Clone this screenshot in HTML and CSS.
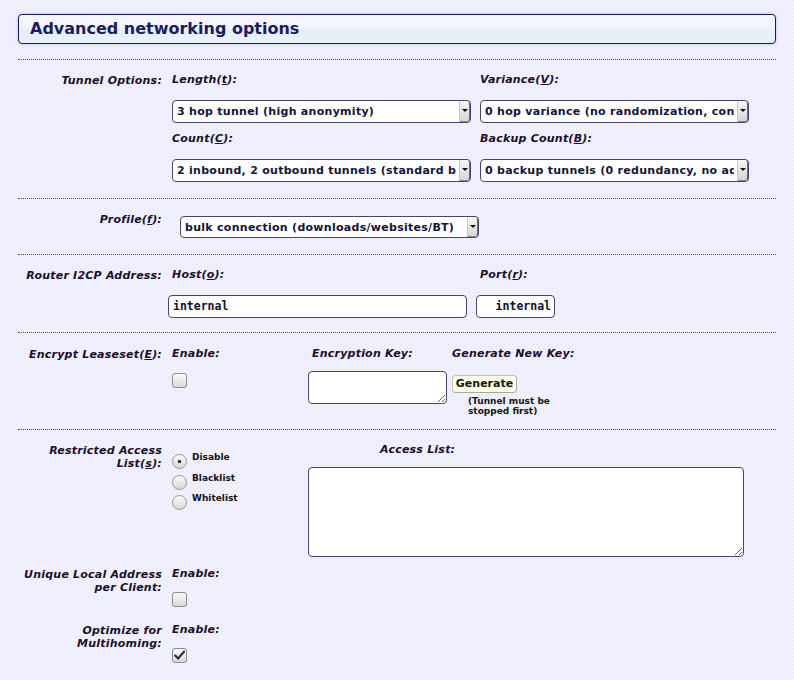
FILE: index.html
```html
<!DOCTYPE html>
<html>
<head>
<meta charset="utf-8">
<title>Advanced networking options</title>
<link rel="stylesheet" href="styles.css">
</head>
<body>
<div class="page">
  <h3 class="panel-title">Advanced networking options</h3>

  <div class="section">
    <div class="lbl">Tunnel Options:</div>
    <div class="body tunnel-grid">
      <div class="flabel">Length(<u>t</u>):</div>
      <div class="flabel">Variance(<u>V</u>):</div>
      <div class="sel w299"><select><option>3 hop tunnel (high anonymity)</option></select><span class="arrow"></span></div>
      <div class="sel w269"><select><option>0 hop variance (no randomization, consistent performance)</option></select><span class="arrow"></span></div>
      <div class="flabel">Count(<u>C</u>):</div>
      <div class="flabel">Backup Count(<u>B</u>):</div>
      <div class="sel w299 last"><select><option>2 inbound, 2 outbound tunnels (standard bandwidth usage, standard reliability)</option></select><span class="arrow"></span></div>
      <div class="sel w269 last"><select><option>0 backup tunnels (0 redundancy, no added resource usage)</option></select><span class="arrow"></span></div>
    </div>
  </div>

  <div class="section">
    <div class="lbl">Profile(<u>f</u>):</div>
    <div class="body">
      <div class="sel profile"><select><option>bulk connection (downloads/websites/BT)</option></select><span class="arrow"></span></div>
    </div>
  </div>

  <div class="section router">
    <div class="lbl">Router I2CP Address:</div>
    <div class="body tunnel-grid">
      <div class="flabel">Host(<u>o</u>):</div>
      <div class="flabel">Port(<u>r</u>):</div>
      <input class="txt host" type="text" value="internal">
      <input class="txt port" type="text" value="internal">
    </div>
  </div>

  <div class="section encrypt">
    <div class="lbl">Encrypt Leaseset(<u>E</u>):</div>
    <div class="body enc-grid">
      <div class="col">
        <div class="flabel enablelabel">Enable:</div>
        <span class="check"></span>
      </div>
      <div class="col">
        <div class="flabel keylabel">Encryption Key:</div>
        <textarea class="area key"></textarea>
      </div>
      <div class="col">
        <div class="flabel genlabel">Generate New Key:</div>
        <button class="btn" type="button">Generate</button>
        <div class="note">(Tunnel must be stopped first)</div>
      </div>
    </div>
  </div>

  <div class="section restricted">
    <div class="lbl">Restricted Access List(<u>s</u>):</div>
    <div class="body acc-grid">
      <div class="radios">
        <div class="radio-row"><span class="radio on"></span><span class="rtext">Disable</span></div>
        <div class="radio-row"><span class="radio"></span><span class="rtext">Blacklist</span></div>
        <div class="radio-row"><span class="radio"></span><span class="rtext">Whitelist</span></div>
      </div>
      <div class="col">
        <div class="flabel acclabel">Access List:</div>
        <textarea class="area acc"></textarea>
      </div>
    </div>
  </div>

  <div class="section plain">
    <div class="lbl">Unique Local Address per Client:</div>
    <div class="body">
      <div class="flabel">Enable:</div>
      <span class="check"></span>
    </div>
  </div>

  <div class="section plain multi">
    <div class="lbl">Optimize for Multihoming:</div>
    <div class="body">
      <div class="flabel">Enable:</div>
      <span class="check on"><svg width="13" height="13" viewBox="0 0 13 13"><path d="M2.2 6.6 L5.1 9.6 L11 2.6" fill="none" stroke="#2e2e2e" stroke-width="2.2" stroke-linecap="round" stroke-linejoin="round"/></svg></span>
    </div>
  </div>
</div>
</body>
</html>
```

FILE: styles.css
```css
* {
  box-sizing: border-box;
}

html, body {
  margin: 0;
  height: 100%;
}

body {
  background-color: #f0f0fd;
  background-image: repeating-conic-gradient(#f3f3ff 0 25%, #ebebfa 0 50%);
  background-size: 4px 4px;
  font-family: "DejaVu Sans", "Liberation Sans", sans-serif;
  color: #1c0e2c;
}

.page {
  padding: 14px 18px 0;
}

.panel-title {
  margin: 0 0 15px;
  height: 30px;
  border: 1px solid #1c1c58;
  border-radius: 4px;
  padding-left: 11px;
  font-size: 16px;
  font-weight: bold;
  line-height: 28px;
  color: #1c1c5e;
  background: linear-gradient(#f6f6ff 0, #f2f3fe 48%, #e6eff9 52%, #e9f1fa 100%);
  box-shadow: 0 0 3px rgba(120, 120, 170, 0.45);
}

.section {
  display: flex;
  align-items: flex-start;
  border-top: 1px dotted #4a4a5a;
  padding: 13px 0 16px;
}

.lbl {
  width: 144px;
  flex-shrink: 0;
  margin-right: 10px;
  padding-top: 1px;
  text-align: right;
  font-size: 11px;
  font-weight: bold;
  font-style: italic;
  line-height: 13px;
  letter-spacing: 0.22px;
  color: #1c0e2c;
}

.body {
  flex: 1;
}

.flabel {
  font-size: 11px;
  font-weight: bold;
  font-style: italic;
  line-height: 14px;
  letter-spacing: 0.22px;
  color: #1c0e2c;
  margin-bottom: 13px;
}

.tunnel-grid {
  display: grid;
  grid-template-columns: 308px 1fr;
}

.sel {
  position: relative;
  height: 23px;
  margin-bottom: 9px;
}

.sel.last {
  margin-bottom: 0;
}

.w299 { width: 299px; }
.w269 { width: 269px; }

.sel.profile {
  width: 299px;
  height: 22px;
  margin: 4px 0 0 8px;
}

.sel select {
  -webkit-appearance: none;
  appearance: none;
  display: block;
  width: 100%;
  height: 100%;
  margin: 0;
  border: 1px solid #45456f;
  border-radius: 4px;
  background: #fff;
  padding: 0 14px 0 4px;
  font-family: "DejaVu Sans", sans-serif;
  font-size: 11px;
  font-weight: bold;
  letter-spacing: 0.28px;
  color: #14143a;
  outline: none;
}

.sel .arrow {
  position: absolute;
  top: 1px;
  bottom: 1px;
  right: 1px;
  width: 11px;
  background: linear-gradient(#f6f6f6, #d6d6d6);
  border-left: 1px solid #c8c8c8;
  border-right: 1px solid #6a6a6a;
  border-bottom: 1px solid #8a8a8a;
  border-radius: 0 3px 3px 0;
}

.sel .arrow::after {
  content: "";
  position: absolute;
  left: 2px;
  top: 50%;
  margin-top: -2px;
  border-top: 3px solid #111;
  border-left: 3px solid transparent;
  border-right: 3px solid transparent;
}

.router {
  padding-bottom: 14px;
}

.txt {
  display: block;
  height: 23px;
  margin: 0 0 0 -4px;
  border: 1px solid #45456f;
  border-radius: 4px;
  background: #fff;
  font-family: "DejaVu Sans Mono", monospace;
  font-size: 11.5px;
  font-weight: bold;
  color: #101030;
  outline: none;
}

.txt.host {
  width: 299px;
  padding: 0 3px 1px 4px;
}

.txt.port {
  width: 79px;
  padding: 0 3px 1px 3px;
  text-align: right;
}

.encrypt {
  padding: 14px 0 13px;
}

.enc-grid {
  display: grid;
  grid-template-columns: 140px 140px 1fr;
}

.col {
  display: flex;
  flex-direction: column;
  align-items: flex-start;
}

.check {
  display: block;
  width: 15px;
  height: 15px;
  border: 1px solid #8c8c8c;
  border-radius: 3px;
  background: linear-gradient(#fbfbfb, #d9d9d9);
  position: relative;
}

.check svg {
  display: block;
  margin: 0;
}

.enablelabel {
  margin-bottom: 12px;
}

.keylabel {
  margin-bottom: 10px;
}

.area {
  display: block;
  border: 1px solid #45456f;
  border-radius: 4px;
  background: #fff;
  resize: both;
  outline: none;
  font-family: "DejaVu Sans Mono", monospace;
  font-size: 11px;
  padding: 2px;
}

.area.key {
  width: 139px;
  height: 33px;
  margin-left: -4px;
}

.genlabel {
  margin-bottom: 14px;
}

.btn {
  display: block;
  height: 18px;
  width: 65px;
  padding: 0;
  margin: 0;
  border: 1px solid #c4c4b4;
  border-bottom-color: #a8a89a;
  border-right-color: #a8a89a;
  border-radius: 4px;
  background: #ffffe8;
  font-family: "DejaVu Sans", sans-serif;
  font-size: 11px;
  font-weight: bold;
  color: #141414;
  line-height: 16px;
}

.note {
  margin: 3px 0 0 16px;
  width: 86px;
  font-size: 9px;
  font-weight: bold;
  line-height: 10px;
  color: #141414;
}

.restricted {
  padding-bottom: 10px;
}

.acc-grid {
  display: grid;
  grid-template-columns: 140px 1fr;
}

.radios {
  margin-top: 9px;
}

.radio-row {
  display: flex;
  align-items: flex-start;
  height: 20.5px;
}

.radio {
  display: block;
  width: 15px;
  height: 15px;
  margin-top: 2px;
  border: 1px solid #979797;
  border-radius: 50%;
  background: linear-gradient(#fbfbfb, #d8d8d8);
  position: relative;
  flex-shrink: 0;
}

.radio.on::after {
  content: "";
  position: absolute;
  left: 5px;
  top: 5px;
  width: 3px;
  height: 3px;
  border-radius: 50%;
  background: #2a2a2a;
  box-shadow: 0 0 1px #2a2a2a;
}

.rtext {
  margin-left: 5px;
  font-size: 9px;
  font-weight: bold;
  line-height: 11px;
  color: #141414;
}

.acclabel {
  margin: 0 0 10px 68px;
}

.area.acc {
  width: 436px;
  height: 90px;
  margin-left: -4px;
}

.plain {
  border-top: none;
  padding: 0;
}

.plain .flabel {
  margin-bottom: 11px;
}

.multi {
  margin-top: 16px;
}
```
